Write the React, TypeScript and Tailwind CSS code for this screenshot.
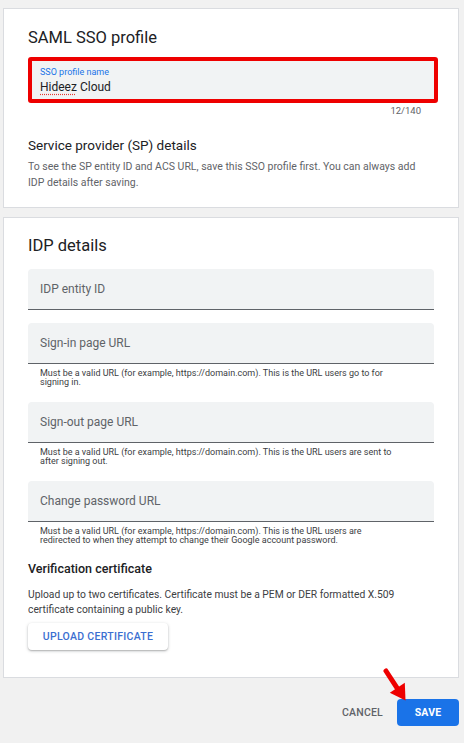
import React from "react";

function Field({ label }: { label: string }) {
  return (
    <div className="h-[41px] w-full rounded-t-[4px] bg-[#f1f3f4] border-b border-[#5f6368] flex items-center pl-[12px]">
      <span className="text-[12px] leading-[16px] text-[#5f6368]">{label}</span>
    </div>
  );
}

function Helper({ l1, l2 }: { l1: string; l2: string }) {
  return (
    <div className="mt-[5px] pl-[12px] text-[9px] leading-[9px] text-[#3c4043] whitespace-nowrap">
      {l1}
      <br />
      {l2}
    </div>
  );
}

export default function App() {
  return (
    <div className="relative w-[464px] h-[743px] overflow-hidden bg-[#f1f1f1] font-[family-name:Roboto,Arial,sans-serif] text-[#202124]">
      {/* Card 1 */}
      <div className="ml-[3px] mt-[8px] w-[456px] border border-[#dadce0] bg-white px-[24px] pt-[17px] pb-[16px]">
        <div className="text-[16.5px] leading-[24px] text-[#202124]">SAML SSO profile</div>
        <div className="mt-[7px] w-[410px] h-[46px] border-[4px] border-[#ee0000] rounded-[3px] bg-[#f1f3f4] pl-[8px] pt-[5px]">
          <div className="text-[9px] leading-[12px] text-[#1a73e8]">SSO profile name</div>
          <div className="mt-[1px] text-[12px] leading-[16px] text-[#202124]">
            <span className="underline decoration-dotted decoration-[#e53935] underline-offset-[3px]">Hideez</span> Cloud
          </div>
        </div>
        <div className="mt-[2px] pr-[13px] text-right text-[9.5px] leading-[12px] text-[#5f6368]">12/140</div>
        <div className="mt-[18px] text-[13.5px] leading-[20px] text-[#202124]">Service provider (SP) details</div>
        <div className="mt-[4px] text-[10.5px] leading-[16px] text-[#5f6368] whitespace-nowrap">
          To see the SP entity ID and ACS URL, save this SSO profile first. You can always add
          <br />
          IDP details after saving.
        </div>
      </div>

      {/* Card 2 */}
      <div className="ml-[3px] mt-[9px] w-[456px] border border-[#dadce0] bg-white px-[24px] pt-[16px] pb-[27px]">
        <div className="text-[16.5px] leading-[24px] text-[#202124]">IDP details</div>
        <div className="mt-[11px]">
          <Field label="IDP entity ID" />
        </div>
        <div className="mt-[13px]">
          <Field label="Sign-in page URL" />
        </div>
        <Helper
          l1="Must be a valid URL (for example, https://domain.com). This is the URL users go to for"
          l2="signing in."
        />
        <div className="mt-[15px]">
          <Field label="Sign-out page URL" />
        </div>
        <Helper
          l1="Must be a valid URL (for example, https://domain.com). This is the URL users are sent to"
          l2="after signing out."
        />
        <div className="mt-[15px]">
          <Field label="Change password URL" />
        </div>
        <Helper
          l1="Must be a valid URL (for example, https://domain.com). This is the URL users are"
          l2="redirected to when they attempt to change their Google account password."
        />
        <div className="mt-[14px] text-[12.5px] leading-[20px] font-medium text-[#202124]">Verification certificate</div>
        <div className="mt-[8px] text-[10.3px] leading-[15px] text-[#3c4043] whitespace-nowrap">
          Upload up to two certificates. Certificate must be a PEM or DER formatted X.509
          <br />
          certificate containing a public key.
        </div>
        <div className="mt-[6px]">
          <button className="h-[27px] w-[140px] rounded-[4px] bg-white shadow-[0_1px_3px_rgba(60,64,67,0.35),0_1px_1px_rgba(60,64,67,0.15)] text-[10.5px] font-medium tracking-[0.3px] text-[#3b6fd1]">
            UPLOAD CERTIFICATE
          </button>
        </div>
      </div>

      {/* Footer */}
      <div className="mt-[21px] flex items-center justify-end pr-[5px] gap-[14px]">
        <span className="text-[10.5px] font-medium tracking-[0.2px] text-[#5f6368]">CANCEL</span>
        <button className="h-[27px] w-[62px] rounded-[4px] bg-[#1a73e8] text-white text-[10.5px] font-bold tracking-[0.2px]">
          SAVE
        </button>
      </div>

      {/* Annotation arrow */}
      <svg className="absolute left-[378px] top-[664px]" width="32" height="40" viewBox="0 0 32 40">
        <line x1="8" y1="7" x2="19.3" y2="24.3" stroke="#ee0000" strokeWidth="5" strokeLinecap="round" />
        <polygon points="26.8,18.8 11.8,28.8 27.5,36.5" fill="#ee0000" />
      </svg>
    </div>
  );
}
